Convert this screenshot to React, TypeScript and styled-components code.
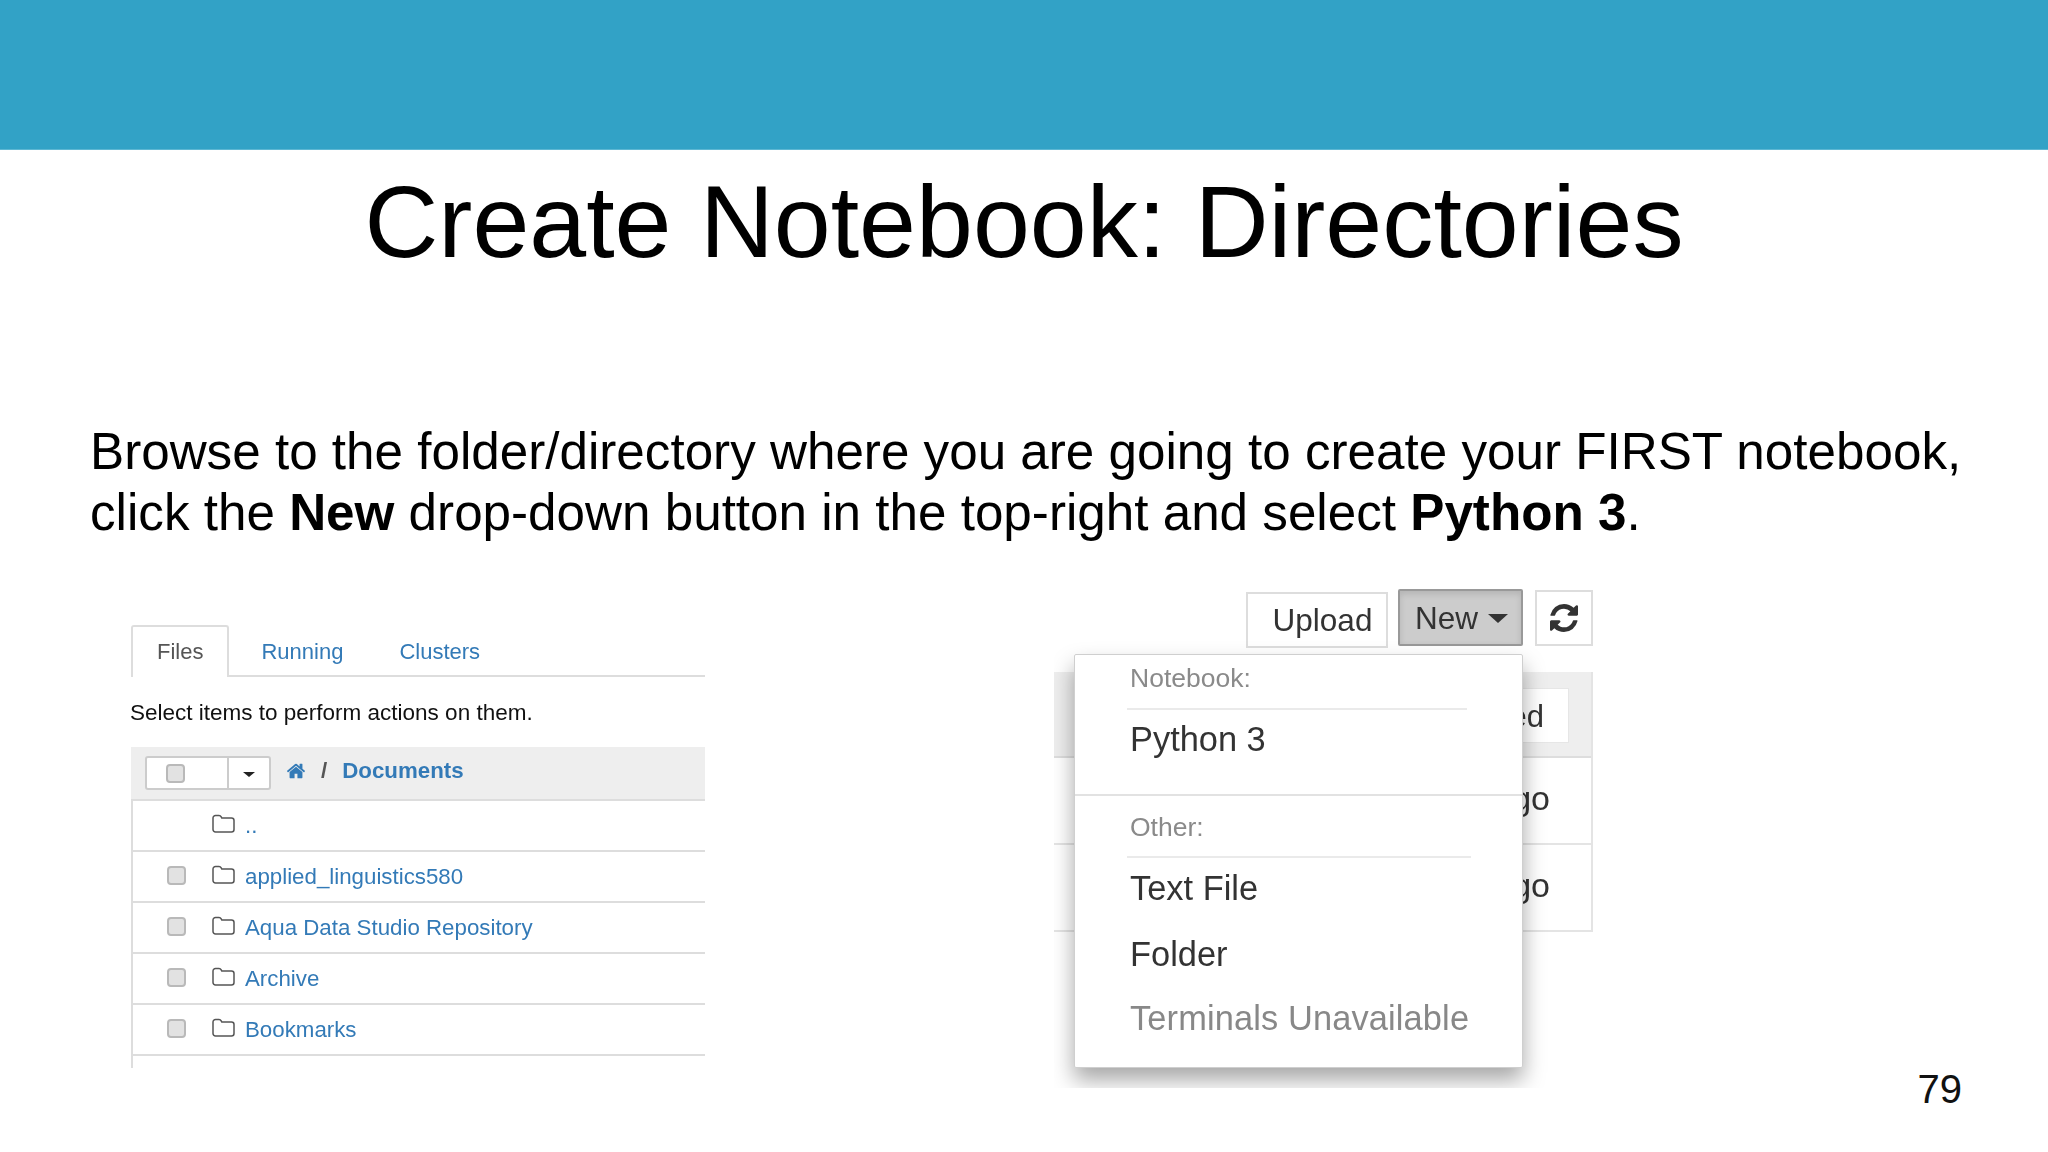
import React from "react";
import styled, { createGlobalStyle } from "styled-components";

const GlobalStyle = createGlobalStyle`
  html, body {
    margin: 0;
    padding: 0;
    background: #fff;
    font-family: "Liberation Sans", Arial, sans-serif;
  }
`;

const FOLDERS = ["applied_linguistics580", "Aqua Data Studio Repository", "Archive", "Bookmarks"];

const FolderIcon = () => (
  <FolderSvg viewBox="0 0 23 19">
    <path
      d="M1 4a2.500 2.500 0 0 1 2.500-2.500h3.500a2.500 2.500 0 0 1 2.200 1.300l.6 1.200h9.700a2.500 2.500 0 0 1 2.500 2.500v9a2.500 2.500 0 0 1-2.500 2.500h-16a2.500 2.500 0 0 1-2.500-2.500z"
      fill="none"
      stroke="#555"
      strokeWidth="1.500"
    />
  </FolderSvg>
);

const HomeIcon = () => (
  <HomeSvg viewBox="0 0 1792 1792">
    <path d="M1472 992v480q0 26-19 45t-45 19h-384v-384h-256v384h-384q-26 0-45-19t-19-45v-480q0-1 .5-3t.5-3l575-474 575 474q1 2 1 6zm223-69l-62 74q-8 9-21 11h-3q-13 0-21-7l-692-577-692 577q-12 8-24 7-13-2-21-11l-62-74q-8-10-7-23.500t11-21.500l719-599q32-26 76-26t76 26l244 204v-195q0-14 9-23t23-9h192q14 0 23 9t9 23v408l219 182q10 8 11 21.500t-7 23.500z" />
  </HomeSvg>
);

const RefreshIcon = () => (
  <RefreshSvg viewBox="0 0 1536 1536">
    <path d="M1511 928q0 5-1 7-64 268-268 434.500t-478 166.500q-146 0-282.500-55t-243.500-157l-129 129q-19 19-45 19t-45-19-19-45v-448q0-26 19-45t45-19h448q26 0 45 19t19 45-19 45l-137 137q71 66 161 102t187 36q134 0 250-65t186-179q11-17 53-117 8-23 30-23h192q13 0 22.500 9.500t9.500 22.500zm25-800v448q0 26-19 45t-45 19h-448q-26 0-45-19t-19-45 19-45l138-138q-148-137-349-137-134 0-250 65t-186 179q-11 17-53 117-8 23-30 23h-199q-13 0-22.500-9.500t-9.500-22.500v-7q65-268 270-434.500t480-166.500q146 0 284 55.500t245 156.500l130-129q19-19 45-19t45 19 19 45z" />
  </RefreshSvg>
);

export default function App() {
  return (
    <Slide>
      <GlobalStyle />
      <Band />
      <Title>Create Notebook: Directories</Title>
      <Body>
        Browse to the folder/directory where you are going to create your FIRST notebook,
        <br />
        click the <b>New</b> drop-down button in the top-right and select <b>Python 3</b>.
      </Body>
      <Figures>
        <FilesPanel>
          <TabBar>
            <Tab $active>Files</Tab>
            <Tab>Running</Tab>
            <Tab>Clusters</Tab>
          </TabBar>
          <Hint>Select items to perform actions on them.</Hint>
          <FileList>
            <Breadcrumb>
              <SelectGroup>
                <SelectBox>
                  <Check />
                </SelectBox>
                <SelectCaret>
                  <Caret $size={6} $color="#222" />
                </SelectCaret>
              </SelectGroup>
              <HomeIcon />
              <Slash>/</Slash>
              <Crumb>Documents</Crumb>
            </Breadcrumb>
            <FileRow>
              <CheckSlot />
              <FolderIcon />
              <FileLink>..</FileLink>
            </FileRow>
            {FOLDERS.map((name) => (
              <FileRow key={name}>
                <CheckSlot>
                  <Check />
                </CheckSlot>
                <FolderIcon />
                <FileLink>{name}</FileLink>
              </FileRow>
            ))}
            <ListTail />
          </FileList>
        </FilesPanel>

        <MenuPanel>
          <Toolbar>
            <ToolButton $top={3} $width={142} $inset={11}>Upload</ToolButton>
            <NewButton>
              New
              <Caret $size={10} $color="#333" />
            </NewButton>
            <ToolButton $top={1} $width={58}>
              <RefreshIcon />
            </ToolButton>
          </Toolbar>
          <BackTable>
            <BackHeader>
              <BackAction>ed</BackAction>
            </BackHeader>
            <BackRow>go</BackRow>
            <BackRow>go</BackRow>
          </BackTable>
          <Dropdown>
            <MenuHeading>Notebook:</MenuHeading>
            <HeadingRule />
            <MenuItem $gap={10}>Python 3</MenuItem>
            <MenuDivider />
            <MenuHeading $other>Other:</MenuHeading>
            <HeadingRule $wide />
            <MenuItem>Text File</MenuItem>
            <MenuItem $gap={28}>Folder</MenuItem>
            <MenuItem $gap={26} $muted>Terminals Unavailable</MenuItem>
          </Dropdown>
        </MenuPanel>

        <PageNumber>79</PageNumber>
      </Figures>
    </Slide>
  );
}

const Slide = styled.div`
  width: 2048px;
  height: 1152px;
  overflow: hidden;
  background: #fff;
  color: #000;
`;

const Band = styled.div`
  height: 150px;
  background: #32a2c6;
  border-bottom: 1px solid #5db7d3;
  box-sizing: border-box;
`;

const Title = styled.h1`
  margin: 0;
  height: 150px;
  font-size: 102.3px;
  font-weight: 400;
  line-height: 144px;
  text-align: center;
`;

const Body = styled.p`
  margin: 0;
  padding: 121px 0 0 90px;
  font-size: 51.2px;
  line-height: 61px;
  white-space: nowrap;
`;

const Figures = styled.div`
  display: flex;
  align-items: flex-start;
  margin-top: 46px;
  padding-left: 131px;
`;

const FilesPanel = styled.div`
  width: 574px;
  margin-top: 36px;
  font-size: 22.3px;
  filter: blur(0.6px);
`;

const TabBar = styled.div`
  display: flex;
  height: 50px;
  border-bottom: 2px solid #ddd;
  box-sizing: content-box;
  font-size: 22px;
`;

const Tab = styled.div<{ $active?: boolean }>`
  display: flex;
  align-items: center;
  justify-content: center;
  height: ${(p) => (p.$active ? "52px" : "50px")};
  box-sizing: border-box;
  padding: ${(p) => (p.$active ? "0 24px 1px" : "3px 28px 0")};
  margin-right: ${(p) => (p.$active ? "4px" : "0")};
  color: ${(p) => (p.$active ? "#555" : "#337ab7")};
  background: #fff;
  border: ${(p) => (p.$active ? "2px solid #ddd" : "none")};
  border-bottom: none;
  border-radius: 3px 3px 0 0;
`;

const Hint = styled.div`
  margin-top: 23px;
  height: 26px;
  line-height: 26px;
  font-size: 22.5px;
  color: #111;
  margin-left: -1px;
`;

const FileList = styled.div`
  margin-top: 21px;
  border-left: 2px solid #ddd;
`;

const Breadcrumb = styled.div`
  display: flex;
  align-items: center;
  height: 54px;
  margin-left: -2px;
  padding-left: 14px;
  box-sizing: border-box;
  background: #eee;
  border-bottom: 2px solid #ddd;
`;

const SelectGroup = styled.div`
  display: flex;
  width: 126px;
  height: 34px;
  box-sizing: border-box;
  background: #fff;
  border: 2px solid #ccc;
  border-radius: 3px;
`;

const SelectBox = styled.div`
  flex: 1;
  display: flex;
  align-items: center;
  padding-left: 19px;
  border-right: 2px solid #ccc;
`;

const SelectCaret = styled.div`
  width: 40px;
  display: flex;
  align-items: center;
  justify-content: center;
  padding-top: 3px;
`;

const Caret = styled.span<{ $size: number; $color: string }>`
  display: inline-block;
  width: 0;
  height: 0;
  border-left: ${(p) => p.$size}px solid transparent;
  border-right: ${(p) => p.$size}px solid transparent;
  border-top: ${(p) => Math.round(p.$size * 0.85)}px solid ${(p) => p.$color};
`;

const Check = styled.span`
  display: block;
  width: 19px;
  height: 19px;
  box-sizing: border-box;
  background: #e2e2e2;
  border: 2px solid #b9b9b9;
  border-radius: 4px;
`;

const HomeSvg = styled.svg`
  width: 20px;
  height: 20px;
  margin: -5px 0 0 15px;
  fill: #337ab7;
`;

const Slash = styled.span`
  margin: -5px 0 0 15px;
  font-weight: 700;
  color: #555;
`;

const Crumb = styled.span`
  margin: -5px 0 0 15px;
  font-weight: 700;
  color: #337ab7;
`;

const FileRow = styled.div`
  display: flex;
  align-items: center;
  height: 51px;
  box-sizing: border-box;
  border-bottom: 2px solid #ddd;
  color: #337ab7;
`;

const CheckSlot = styled.div`
  width: 79px;
  height: 19px;
  padding-left: 34px;
  box-sizing: border-box;
  margin-top: -3px;
`;

const FolderSvg = styled.svg`
  width: 23px;
  height: 19px;
  margin-top: -4px;
  flex: none;
`;

const FileLink = styled.span`
  margin-left: 10px;
`;

const ListTail = styled.div`
  height: 12px;
`;

const MenuPanel = styled.div`
  position: relative;
  width: 539px;
  height: 499px;
  margin-left: 349px;
  overflow: hidden;
  filter: blur(0.6px);
  color: #333;
`;

const Toolbar = styled.div`
  display: flex;
  align-items: flex-start;
  justify-content: flex-end;
  gap: 10px;
  height: 57px;
  font-size: 31.5px;
`;

const ToolButton = styled.div<{ $top: number; $width: number; $inset?: number }>`
  display: flex;
  align-items: center;
  justify-content: center;
  width: ${(p) => p.$width}px;
  height: 56px;
  margin-top: ${(p) => p.$top}px;
  padding-left: ${(p) => p.$inset ?? 0}px;
  box-sizing: border-box;
  background: #fff;
  border: 2px solid #ddd;
`;

const NewButton = styled.div`
  display: flex;
  align-items: center;
  gap: 10px;
  width: 125px;
  height: 57px;
  padding: 2px 0 0 15px;
  box-sizing: border-box;
  background: #ccc;
  border: 2px solid #999;
  border-radius: 2px;
  box-shadow: inset 0 3px 6px rgba(0, 0, 0, 0.12);
  margin-right: 2px;
`;

const RefreshSvg = styled.svg`
  width: 28px;
  height: 28px;
  fill: #333;
`;

const BackTable = styled.div`
  margin-top: 26px;
  width: 537px;
  border-right: 2px solid #e4e4e4;
`;

const BackHeader = styled.div`
  display: flex;
  justify-content: flex-end;
  align-items: center;
  height: 86px;
  padding: 3px 22px 0 0;
  box-sizing: border-box;
  background: #eee;
  border-bottom: 2px solid #ddd;
`;

const BackAction = styled.div`
  width: 120px;
  height: 55px;
  line-height: 55px;
  text-align: right;
  padding-right: 24px;
  box-sizing: border-box;
  background: #fff;
  border: 1px solid #e6e6e6;
  font-size: 31px;
`;

const BackRow = styled.div`
  display: flex;
  justify-content: flex-end;
  align-items: center;
  height: 87px;
  padding: 0 41px 5px 0;
  box-sizing: border-box;
  border-bottom: 2px solid #e4e4e4;
  font-size: 34px;
`;

const Dropdown = styled.div`
  position: absolute;
  top: 65px;
  left: 20px;
  width: 449px;
  height: 414px;
  box-sizing: border-box;
  padding-left: 55px;
  background: #fff;
  border: 1px solid #cfcfcf;
  border-radius: 2px;
  box-shadow: 0 12px 22px rgba(0, 0, 0, 0.35);
`;

const MenuHeading = styled.div<{ $other?: boolean }>`
  margin-top: ${(p) => (p.$other ? "16px" : "8px")};
  height: 30px;
  line-height: 30px;
  font-size: 26.5px;
  color: #8a8a8a;
`;

const HeadingRule = styled.div<{ $wide?: boolean }>`
  width: ${(p) => (p.$wide ? 344 : 340)}px;
  height: 2px;
  margin: ${(p) => (p.$wide ? 14 : 15)}px 0 0 -3px;
  background: #eaeaea;
`;

const MenuItem = styled.div<{ $gap?: number; $muted?: boolean }>`
  margin-top: ${(p) => p.$gap ?? 11}px;
  height: 38px;
  line-height: 38px;
  font-size: 34.4px;
  white-space: nowrap;
  letter-spacing: ${(p) => (p.$muted ? "0.13px" : "0")};
  color: ${(p) => (p.$muted ? "#888" : "#333")};
`;

const MenuDivider = styled.div`
  height: 2px;
  margin: 36px 0 0 -55px;
  background: #e2e2e2;
`;

const PageNumber = styled.div`
  margin-left: auto;
  margin-right: 86px;
  align-self: flex-end;
  font-size: 40px;
  line-height: 46px;
  color: #111;
  margin-bottom: -24px;
`;
